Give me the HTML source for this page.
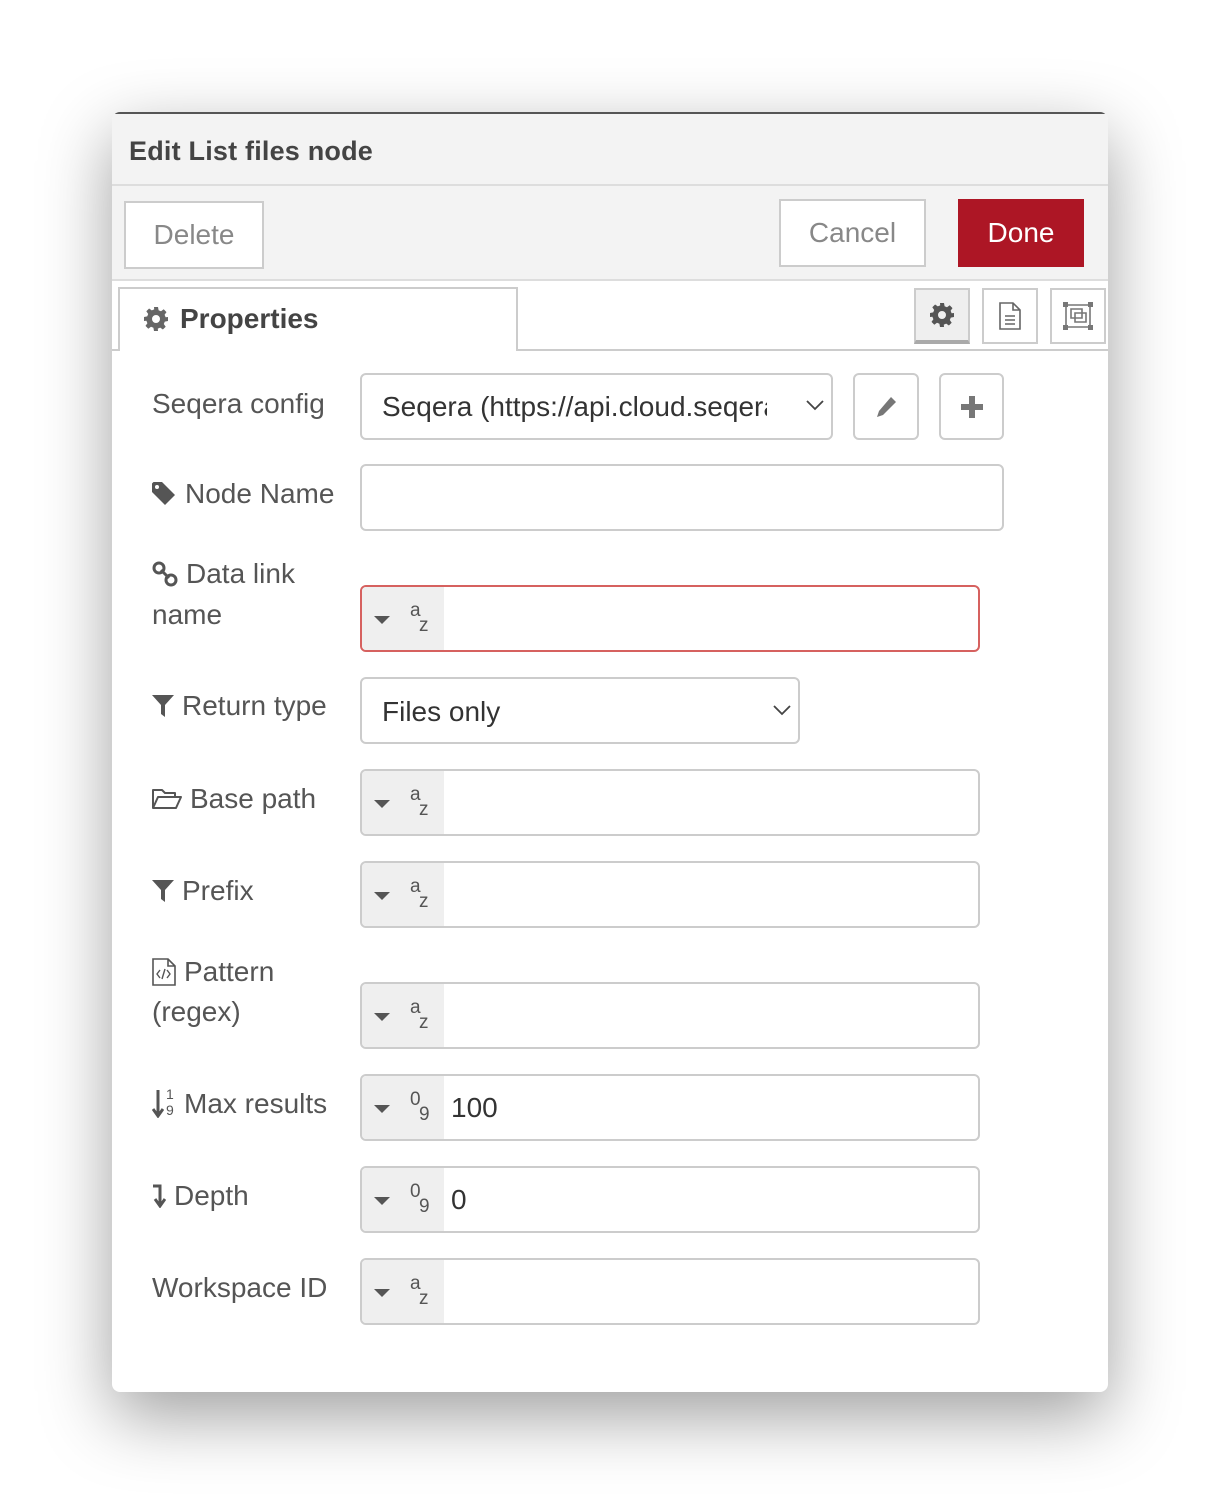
<!DOCTYPE html>
<html><head><meta charset="utf-8"><style>
*{box-sizing:border-box;margin:0;padding:0}
body{width:1220px;height:1504px;background:#fff;font-family:"Liberation Sans",Arial,sans-serif;color:#555;position:relative;overflow:hidden}
.dlg{position:absolute;left:112px;top:112px;width:996px;height:1280px;background:#fff;border-radius:8px;box-shadow:0 24px 70px rgba(0,0,0,.38);overflow:hidden}
.topline{position:absolute;left:0;top:0;width:996px;height:2px;background:#555;z-index:5}
.abs{position:absolute}
.hdr{left:0;top:0;width:996px;height:74px;background:#f3f3f3;border-bottom:2px solid #ddd}
.title{left:17px;top:24px;font-size:27px;font-weight:bold;color:#444;letter-spacing:0.2px}
.bar{left:0;top:74px;width:996px;height:95px;background:#f3f3f3;border-bottom:2px solid #ddd}
.btn{position:absolute;border:2px solid #ccc;background:#fff;color:#888;font-size:27px;display:flex;align-items:center;justify-content:center}
.lab{position:absolute;font-size:28px;color:#555;display:flex;align-items:center;gap:8px;left:40px}
.inp{position:absolute;border:2px solid #ccc;border-radius:6px;background:#fff}
.typed{position:absolute;border:2px solid #ccc;border-radius:6px;background:#fff;overflow:hidden;width:620px;height:67px;left:248px}
.typed .g{position:absolute;left:0;top:0;width:82px;height:100%;background:#efefef}
.typed .tri{position:absolute;left:12px;top:29px;width:0;height:0;border-left:8px solid transparent;border-right:8px solid transparent;border-top:8px solid #555}
.typed .a{position:absolute;left:48px;top:13px;font-size:19px;color:#555}
.typed .z{position:absolute;left:57px;top:28px;font-size:19px;color:#555}
.typed .v{position:absolute;left:89px;top:16px;font-size:28px;color:#333}
.tabbtn{position:absolute;top:176px;width:56px;height:56px;border:2px solid #ccc;background:#fff;display:flex;align-items:center;justify-content:center}
</style></head><body>
<div class="dlg">
<div class="topline"></div>
<div class="abs hdr"></div>
<div class="abs title">Edit List files node</div>
<div class="abs bar"></div>
<div class="btn" style="left:12px;top:89px;width:140px;height:68px;font-size:28px">Delete</div>
<div class="btn" style="left:667px;top:87px;width:147px;height:68px;font-size:28px">Cancel</div>
<div class="btn" style="left:846px;top:87px;width:126px;height:68px;background:#ad1625;border-color:#ad1625;color:#fff;font-size:28px">Done</div>
<!-- tabs -->
<div class="abs" style="left:0;top:237px;width:996px;height:2px;background:#ccc"></div>
<div class="abs" style="left:6px;top:175px;width:400px;height:64px;border:2px solid #ccc;border-bottom:none;background:#fff"></div>
<div class="abs" style="left:32px;top:191px;display:flex;align-items:center;gap:12px;font-size:28px;font-weight:bold;color:#444">
<svg width="24" height="24" viewBox="0 0 24 24"><path fill="#666" d="M10 0h4l.6 3.2 2.4 1 2.7-1.9 2.8 2.8-1.9 2.7 1 2.4L24 10v4l-3.2.6-1 2.4 1.9 2.7-2.8 2.8-2.7-1.9-2.4 1L14 24h-4l-.6-3.2-2.4-1-2.7 1.9-2.8-2.8 1.9-2.7-1-2.4L0 14v-4l3.2-.6 1-2.4-1.9-2.7 2.8-2.8 2.7 1.9 2.4-1zM12 8a4 4 0 100 8 4 4 0 000-8z"/></svg>Properties</div>
<div class="tabbtn" style="left:802px;background:#efefef;border-bottom:4px solid #aaa"><svg width="24" height="24" viewBox="0 0 24 24"><path fill="#555" d="M10 0h4l.6 3.2 2.4 1 2.7-1.9 2.8 2.8-1.9 2.7 1 2.4L24 10v4l-3.2.6-1 2.4 1.9 2.7-2.8 2.8-2.7-1.9-2.4 1L14 24h-4l-.6-3.2-2.4-1-2.7 1.9-2.8-2.8 1.9-2.7-1-2.4L0 14v-4l3.2-.6 1-2.4-1.9-2.7 2.8-2.8 2.7 1.9 2.4-1zM12 8a4 4 0 100 8 4 4 0 000-8z"/></svg></div>
<div class="tabbtn" style="left:870px"><svg width="22" height="28" viewBox="0 0 22 28"><path d="M1 1h13l7 7v19H1z M14 1v7h7 M6 14h10M6 18h10M6 22h10" fill="none" stroke="#666" stroke-width="1.6"/></svg></div>
<div class="tabbtn" style="left:938px"><svg width="30" height="28" viewBox="0 0 30 28"><path d="M3 3h24v22H3z M8 7h11v9H8z M12 11h11v9H12z" fill="none" stroke="#777" stroke-width="1.6"/><rect x="0" y="0" width="5" height="5" fill="#777"/><rect x="25" y="0" width="5" height="5" fill="#777"/><rect x="0" y="23" width="5" height="5" fill="#777"/><rect x="25" y="23" width="5" height="5" fill="#777"/></svg></div>

<div class="lab" style="top:276px">Seqera config</div>
<div class="inp" style="left:248px;top:261px;width:473px;height:67px"><div class="abs" style="left:20px;top:16px;font-size:28px;color:#333;white-space:nowrap;width:385px;overflow:hidden">Seqera (https://api.cloud.seqera.io)</div>
<svg class="abs" style="left:444px;top:24px" width="18" height="12" viewBox="0 0 18 12"><path d="M1 2l8 8 8-8" fill="none" stroke="#444" stroke-width="1.8"/></svg></div>
<div class="inp" style="left:741px;top:261px;width:66px;height:67px;display:flex;align-items:center;justify-content:center"><svg width="24" height="24" viewBox="0 0 24 24"><path d="M17 2l5 5L9 20l-6 2 2-6z" fill="#777"/></svg></div>
<div class="inp" style="left:827px;top:261px;width:65px;height:67px;display:flex;align-items:center;justify-content:center"><svg width="22" height="22" viewBox="0 0 22 22"><path d="M8 0h6v8h8v6h-8v8H8v-8H0V8h8z" fill="#777"/></svg></div>

<div class="lab" style="top:366px"><svg width="25" height="24" viewBox="0 0 25 24"><path d="M0 1.5V10l13 13 10-10L10 0H1.5z" fill="#555"/><circle cx="5" cy="5" r="2" fill="#fff"/></svg>Node Name</div>
<div class="inp" style="left:248px;top:352px;width:644px;height:67px"></div>

<div class="lab" style="top:446px"><svg width="26" height="26" viewBox="0 0 26 26"><g fill="none" stroke="#555" stroke-width="3"><rect x="2" y="2" width="10" height="10" rx="5" transform="rotate(45 7 7)"/><rect x="14" y="14" width="10" height="10" rx="5" transform="rotate(45 19 19)"/><path d="M9 9l8 8"/></g></svg>Data link</div>
<div class="lab" style="top:487px">name</div>
<div class="typed" style="top:473px;border-color:#d6615f"><div class="g"></div><div class="tri"></div><div class="a">a</div><div class="z">z</div></div>

<div class="lab" style="top:578px"><svg width="22" height="22" viewBox="0 0 22 22"><path d="M0 0h22L13 10v12l-4-3v-9z" fill="#555"/></svg>Return type</div>
<div class="inp" style="left:248px;top:565px;width:440px;height:67px"><div class="abs" style="left:20px;top:17px;font-size:28px;color:#333">Files only</div>
<svg class="abs" style="left:411px;top:25px" width="18" height="12" viewBox="0 0 18 12"><path d="M1 2l8 8 8-8" fill="none" stroke="#444" stroke-width="1.8"/></svg></div>

<div class="lab" style="top:671px"><svg width="30" height="22" viewBox="0 0 30 22"><path d="M1 20V2h9l3 3h10v4 M1 20l5-11h23l-5 11z" fill="none" stroke="#555" stroke-width="2" stroke-linejoin="round"/></svg>Base path</div>
<div class="typed" style="top:657px"><div class="g"></div><div class="tri"></div><div class="a">a</div><div class="z">z</div></div>

<div class="lab" style="top:763px"><svg width="22" height="22" viewBox="0 0 22 22"><path d="M0 0h22L13 10v12l-4-3v-9z" fill="#555"/></svg>Prefix</div>
<div class="typed" style="top:749px"><div class="g"></div><div class="tri"></div><div class="a">a</div><div class="z">z</div></div>

<div class="lab" style="top:844px"><svg width="24" height="28" viewBox="0 0 24 28"><path d="M1 1h15l7 7v19H1z M16 1v7h7" fill="none" stroke="#555" stroke-width="1.6"/><path d="M8 12l-3 4 3 4M15 12l3 4-3 4M13 11l-3 10" fill="none" stroke="#555" stroke-width="1.4"/></svg>Pattern</div>
<div class="lab" style="top:884px">(regex)</div>
<div class="typed" style="top:870px"><div class="g"></div><div class="tri"></div><div class="a">a</div><div class="z">z</div></div>

<div class="lab" style="top:976px"><span style="position:relative;width:24px;height:28px;display:inline-block"><svg class="abs" style="left:0;top:0" width="12" height="28" viewBox="0 0 12 28"><path d="M6 0v24M1 19l5 7 5-7" fill="none" stroke="#555" stroke-width="3"/></svg><span class="abs" style="left:14px;top:-4px;font-size:14px">1</span><span class="abs" style="left:14px;top:12px;font-size:14px">9</span></span>Max results</div>
<div class="typed" style="top:962px"><div class="g"></div><div class="tri"></div><div class="a">0</div><div class="z">9</div><div class="v">100</div></div>

<div class="lab" style="top:1068px"><svg width="14" height="24" viewBox="0 0 14 24"><path d="M1 2h7v18M3 15l5 7 5-7" fill="none" stroke="#555" stroke-width="3"/></svg>Depth</div>
<div class="typed" style="top:1054px"><div class="g"></div><div class="tri"></div><div class="a">0</div><div class="z">9</div><div class="v">0</div></div>

<div class="lab" style="top:1160px">Workspace ID</div>
<div class="typed" style="top:1146px"><div class="g"></div><div class="tri"></div><div class="a">a</div><div class="z">z</div></div>
</div>
</body></html>
